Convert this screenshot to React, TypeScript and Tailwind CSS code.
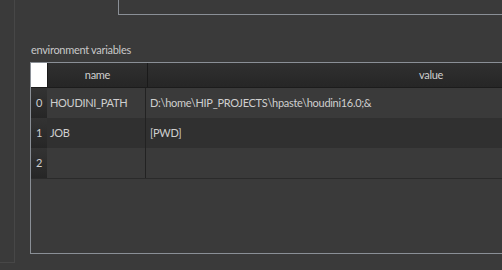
import React from "react";

const font = { fontFamily: "Lato, 'Noto Sans', sans-serif" };

export default function App() {
  const rows = [
    { n: "0", name: "HOUDINI_PATH", value: "D:\\home\\HIP_PROJECTS\\hpaste\\houdini16.0;&", bg: "bg-[#3a3a3a]" },
    { n: "1", name: "JOB", value: "[PWD]", bg: "bg-[#303030]" },
    { n: "2", name: "", value: "", bg: "bg-[#3a3a3a]" },
  ];
  return (
    <div className="w-[502px] h-[270px] bg-[#3a3a3a] overflow-hidden flex text-[#cfcfcf]" style={font}>
      <div className="w-[15px] h-[263px] shrink-0 border-r border-b border-[#474747]" />
      <div className="flex-1 flex flex-col min-w-0">
        <div className="ml-[103px] h-[15px] w-[500px] border-l border-b border-[#8a8f96]" />
        <div className="ml-[16px] mt-[28px] h-[19px] text-[11px] leading-[13px] tracking-[-0.3px] text-[#c8c8c8]">environment variables</div>
        <div className="ml-[15px] w-[700px] h-[192px] border border-[#8a8f96] flex flex-col text-[11px] tracking-[-0.3px]">
          <div className="flex h-[25px] border-b border-[#1c1c1c] bg-gradient-to-b from-[#303030] to-[#262626]">
            <div className="w-[16px] bg-white shrink-0" />
            <div className="w-[101px] shrink-0 border-r border-[#1a1a1a] border-l border-l-[#1a1a1a] flex items-center justify-center">name</div>
            <div className="w-[566px] shrink-0 flex items-center justify-center">value</div>
          </div>
          {rows.map((r) => (
            <div key={r.n} className={`flex h-[30px] ${r.bg}`}>
              <div className="w-[16px] shrink-0 bg-gradient-to-b from-[#333333] to-[#262626] flex items-center justify-center">{r.n}</div>
              <div className="w-[99px] shrink-0 border-r border-[#222222] flex items-center pl-[3px]">{r.name}</div>
              <div className="flex-1 flex items-center pl-[4px] whitespace-nowrap">{r.value}</div>
            </div>
          ))}
          <div className="border-t border-[#2a2a2a] flex-1" />
        </div>
      </div>
    </div>
  );
}
